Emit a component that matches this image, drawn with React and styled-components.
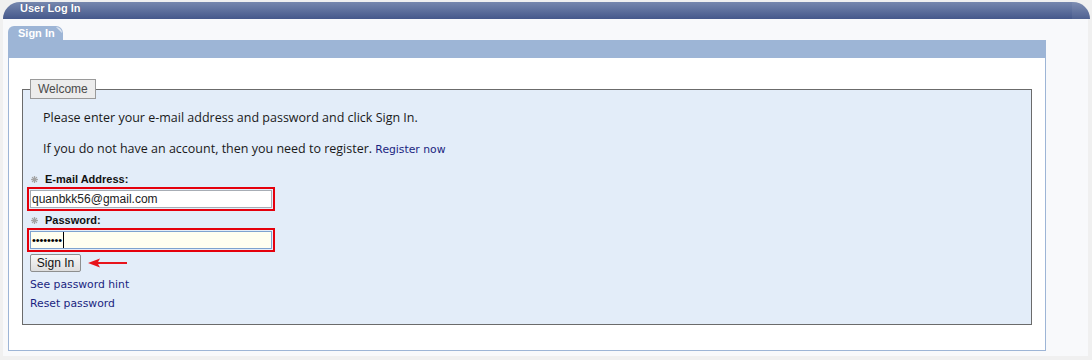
import React from "react";
import styled, { createGlobalStyle } from "styled-components";

const GlobalStyle = createGlobalStyle`
  html, body {
    margin: 0;
    padding: 0;
    background: #f0f0f0;
  }
  body {
    font-family: "Liberation Sans", Arial, sans-serif;
  }
`;

const Page = styled.div`
  width: 1092px;
  height: 360px;
  box-sizing: border-box;
  padding: 2px 2px 0 3px;
  overflow: hidden;
`;

const Header = styled.div`
  position: relative;
  height: 17px;
  padding-left: 17px;
  border-radius: 17px 17px 0 0;
  background: linear-gradient(#7687ae, #45588b);
  color: #fff;
  font: bold 11px/12px "Liberation Sans", Arial, sans-serif;
  text-shadow: 0 0 1px rgba(30, 40, 80, 0.5);
  /* lighter cap on the right end */
  &::after {
    content: "";
    position: absolute;
    top: 0;
    right: 0;
    width: 18px;
    height: 100%;
    border-top-right-radius: 17px;
    background: rgba(255, 255, 255, 0.06);
  }
`;

const Panel = styled.div`
  margin-right: 2px;
  padding: 7px 42px 5px 5px;
  background: #f8f9fb;
`;

const TabRow = styled.div`
  display: flex;
  height: 14px;
`;

const Tab = styled.div`
  position: relative;
  width: 55px;
  box-sizing: border-box;
  padding-left: 10px;
  border-radius: 6px 7px 0 0;
  background: #9db5d6;
  color: #fff;
  font: bold 11px/15px "Liberation Sans", Arial, sans-serif;
  &::after {
    content: "";
    position: absolute;
    top: 1px;
    right: 1px;
    width: 6px;
    height: 6px;
    border-top-right-radius: 6px;
    background: linear-gradient(to bottom left, #dfe7f2 45%, transparent 55%);
  }
`;

const TabBar = styled.div`
  height: 18px;
  background: #9db5d6;
`;

const Content = styled.div`
  padding: 21px 13px 25px 13px;
  background: #fff;
  border: 1px solid #9db5d6;
  border-top: none;
`;

const Box = styled.fieldset`
  margin: 0;
  padding: 0 0 12px 0;
  min-width: 0;
  border: 1px solid #6b6b6b;
  background: #e3edf9;
`;

const Legend = styled.legend`
  margin-left: 7px;
  padding: 0 7px;
  height: 20px;
  box-sizing: border-box;
  border: 1px solid #9a9a9a;
  background: #ececec;
  color: #4a4a4a;
  font: 12px/18px "Liberation Sans", Arial, sans-serif;
`;

const Intro = styled.p`
  margin: ${(p) => (p.$first ? "11px" : "15px")} 0 0 20px;
  color: #1a1a1a;
  font: 12.5px/16px "Open Sans", "Noto Sans", sans-serif;
`;

const Link = styled.a`
  color: #1a1f80;
  text-decoration: none;
  font: 10.8px/16px "DejaVu Sans", Verdana, sans-serif;
  cursor: pointer;
`;

const Label = styled.label`
  display: flex;
  align-items: center;
  gap: 7px;
  margin-top: ${(p) => p.$top}px;
  padding-left: 8px;
  color: #111;
  font: bold 11px/15px "Liberation Sans", Arial, sans-serif;
`;

const Highlight = styled.div`
  width: 248px;
  height: 24px;
  box-sizing: border-box;
  margin-left: 4px;
  padding: 1px;
  border: 2px solid #e5000c;
`;

const TextInput = styled.input`
  display: block;
  width: 100%;
  height: 100%;
  box-sizing: border-box;
  margin: 0;
  padding: 0 0 0 1px;
  border: 1px solid #a7adb5;
  background: #fff;
  color: #222;
  font: 12px "Liberation Sans", Arial, sans-serif;
  outline: none;
`;

const PasswordField = styled.div`
  display: flex;
  align-items: center;
  height: 100%;
  box-sizing: border-box;
  padding-left: 1px;
  border: 1px solid #7ea3cf;
  background: #fffff0;
`;

const Dots = styled.span`
  color: #000;
  font: 11px/16px "Liberation Sans", Arial, sans-serif;
  letter-spacing: -0.1px;
`;

const Caret = styled.span`
  width: 1px;
  height: 16px;
  margin-left: 1px;
  background: #000;
`;

const ButtonRow = styled.div`
  display: flex;
  align-items: center;
  gap: 7px;
  margin: 2px 0 0 7px;
`;

const Button = styled.button`
  width: 51px;
  height: 18px;
  margin: 0;
  padding: 0;
  border: 1px solid #8e8f8f;
  border-radius: 2px;
  background: linear-gradient(#f7f7f7, #dedede);
  color: #111;
  font: 12px "Liberation Sans", Arial, sans-serif;
  cursor: pointer;
`;

const Links = styled.div`
  display: flex;
  flex-direction: column;
  align-items: flex-start;
  gap: 3px;
  margin: 5px 0 0 7px;
`;

const Star = () => (
  <svg width="7" height="7" viewBox="0 0 7 7" aria-hidden="true">
    <g stroke="#a3a3a3" strokeWidth="1.3" strokeLinecap="round">
      <line x1="3.5" y1="0.6" x2="3.5" y2="6.4" />
      <line x1="0.6" y1="3.5" x2="6.4" y2="3.5" />
      <line x1="1.4" y1="1.4" x2="5.6" y2="5.6" />
      <line x1="5.6" y1="1.4" x2="1.4" y2="5.6" />
    </g>
  </svg>
);

const Arrow = () => (
  <svg width="40" height="10" viewBox="0 0 40 10" aria-hidden="true">
    <line x1="8" y1="5" x2="39" y2="5" stroke="#e8141c" strokeWidth="2" />
    <polygon points="0,5 12,0.5 9.5,5 12,9.5" fill="#e8141c" />
  </svg>
);

export default function App() {
  return (
    <>
      <GlobalStyle />
      <Page>
        <Header>User Log In</Header>
        <Panel>
          <TabRow>
            <Tab>Sign In</Tab>
          </TabRow>
          <TabBar />
          <Content>
            <Box>
              <Legend>Welcome</Legend>
              <Intro $first>
                Please enter your e-mail address and password and click Sign In.
              </Intro>
              <Intro>
                If you do not have an account, then you need to register.{" "}
                <Link>Register now</Link>
              </Intro>
              <Label $top={14}>
                <Star />
                E-mail Address:
              </Label>
              <Highlight>
                <TextInput readOnly value="quanbkk56@gmail.com" />
              </Highlight>
              <Label $top={2}>
                <Star />
                Password:
              </Label>
              <Highlight>
                <PasswordField>
                  <Dots>••••••••</Dots>
                  <Caret />
                </PasswordField>
              </Highlight>
              <ButtonRow>
                <Button>Sign In</Button>
                <Arrow />
              </ButtonRow>
              <Links>
                <Link>See password hint</Link>
                <Link>Reset password</Link>
              </Links>
            </Box>
          </Content>
        </Panel>
      </Page>
    </>
  );
}
